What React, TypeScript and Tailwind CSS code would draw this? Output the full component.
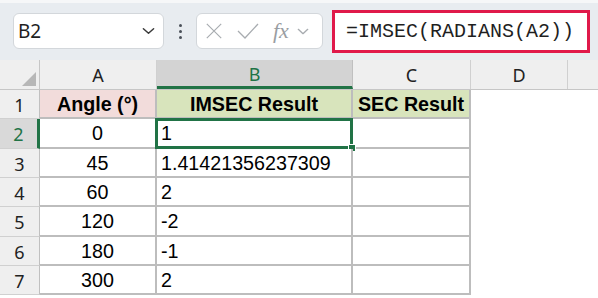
import React from 'react';

const cellFont = { fontFamily: '"Liberation Sans", Arial, sans-serif' };
const uiFont = { fontFamily: '"Noto Sans", "Open Sans", sans-serif' };

const rows = [
  { n: 1, h: 'h-[29px]', a: 'Angle (°)', b: 'IMSEC Result', c: 'SEC Result', head: true },
  { n: 2, h: 'h-[30px]', a: '0', b: '1', c: '' },
  { n: 3, h: 'h-[29px]', a: '45', b: '1.41421356237309', c: '' },
  { n: 4, h: 'h-[29px]', a: '60', b: '2', c: '' },
  { n: 5, h: 'h-[30px]', a: '120', b: '-2', c: '' },
  { n: 6, h: 'h-[29px]', a: '180', b: '-1', c: '' },
  { n: 7, h: 'h-[29px]', a: '300', b: '2', c: '' },
];

const Chevron = ({ className }: { className: string }) => (
  <svg viewBox="0 0 14 8" className={className} fill="none" strokeWidth="1.6" strokeLinecap="round" strokeLinejoin="round">
    <path d="M1.5 1.5 L7 6.5 L12.5 1.5" stroke="currentColor" />
  </svg>
);

const Toolbar = () => (
  <div className="h-[60px] bg-[#e8ecf0] border-t-[3px] border-[#f6f7f8] flex items-start pt-[10px]">
    <div className="ml-[13px] w-[151px] h-[36px] bg-white border border-[#d3d7db] rounded-[6px] flex items-center justify-between pl-[4px] pr-[8px]">
      <span className="text-[19px] text-[#1f1f1f]" style={uiFont}>B2</span>
      <Chevron className="w-[13px] h-[8px] text-[#3a3a3a]" />
    </div>
    <div className="w-[32px] h-[36px] flex flex-col items-center justify-center gap-[3px]">
      <div className="w-[3px] h-[3px] rounded-full bg-[#4a5058]" />
      <div className="w-[3px] h-[3px] rounded-full bg-[#4a5058]" />
      <div className="w-[3px] h-[3px] rounded-full bg-[#4a5058]" />
    </div>
    <div className="w-[127px] h-[36px] bg-white border border-[#d3d7db] rounded-[6px] flex items-center pl-[8px]">
      <svg viewBox="0 0 20 20" className="w-[18px] h-[18px]" fill="none" stroke="#a8acb0" strokeWidth="1.3">
        <path d="M2 2 L18 18 M18 2 L2 18" />
      </svg>
      <svg viewBox="0 0 22 18" className="w-[22px] h-[18px] ml-[14px]" fill="none" stroke="#a8acb0" strokeWidth="1.3">
        <path d="M1 9 L8 16 L21 2" />
      </svg>
      <span className="ml-[14px] text-[22px] italic text-[#9a9ea2] leading-none" style={{ fontFamily: '"Liberation Serif", serif' }}>fx</span>
      <Chevron className="w-[12px] h-[7px] text-[#a8acb0] ml-[8px]" />
    </div>
    <div className="ml-[9px] -mt-[3px] w-[258px] h-[43px] bg-white border-[3px] border-[#e0194a] flex items-center pl-[11px]">
      <span className="text-[20px] text-[#1f1f1f]" style={{ fontFamily: '"Liberation Mono", "DejaVu Sans Mono", monospace' }}>
        =IMSEC(RADIANS(A2))
      </span>
    </div>
  </div>
);

const HeaderRow = () => (
  <div className="flex h-[30px] bg-[#efefef] border-b border-[#c6c6c6]" style={uiFont}>
    <div className="w-[40px] shrink-0 border-r border-[#c6c6c6] relative">
      <div className="absolute right-[3px] bottom-[3px] w-0 h-0 border-l-[14px] border-l-transparent border-b-[14px] border-b-[#b7b7b7]" />
    </div>
    <div className="w-[117px] shrink-0 border-r border-[#d0d0d0] flex items-center justify-center text-[18px] text-[#222] pt-[2px]">A</div>
    <div className="w-[196px] shrink-0 bg-[#d3d3d3] border-r border-[#c0c0c0] border-b-[3px] border-b-[#217346] flex items-center justify-center text-[18px] text-[#217346] pt-[3px]">B</div>
    <div className="w-[118px] shrink-0 border-r border-[#d0d0d0] flex items-center justify-center text-[18px] text-[#222] pt-[2px]">C</div>
    <div className="w-[97px] shrink-0 border-r border-[#d0d0d0] flex items-center justify-center text-[18px] text-[#222] pt-[2px]">D</div>
    <div className="flex-1" />
  </div>
);

const Grid = () => (
  <div>
    <HeaderRow />
    {rows.map((r) => {
      const sel = r.n === 2;
      return (
        <div key={r.n} className={`flex ${r.h}`}>
          <div
            className={`w-[40px] shrink-0 flex items-center justify-center text-[18px] border-b border-[#d0d0d0] pt-[2px] ${
              sel ? 'bg-[#d9d9d9] text-[#217346] border-r-[3px] border-r-[#217346]' : 'bg-[#efefef] text-[#222] border-r border-r-[#c0c0c0]'
            }`}
            style={uiFont}
          >
            {r.n}
          </div>
          <div
            className={`w-[117px] shrink-0 flex items-center justify-center text-[19.7px] text-black border-r-2 border-b-2 border-[#bdbdbd] pt-[2px] ${
              r.head ? 'bg-[#f2dcdb] font-bold' : 'bg-white'
            }`}
            style={cellFont}
          >
            {r.a}
          </div>
          <div
            className={`w-[196px] shrink-0 flex items-center text-[19.7px] text-black border-r-2 border-b-2 border-[#bdbdbd] relative pt-[2px] ${
              r.head ? 'bg-[#d8e4bc] font-bold justify-center' : 'bg-white pl-[4px]'
            }`}
            style={cellFont}
          >
            {r.b}
            {sel && (
              <>
                <div className="absolute -left-[2px] -top-[1px] -right-[2px] -bottom-[2px] border-[3px] border-[#217346] pointer-events-none" />
                <div className="absolute -right-[5px] -bottom-[5px] w-[8px] h-[8px] bg-[#217346] border border-white" />
              </>
            )}
          </div>
          <div
            className={`w-[118px] shrink-0 flex items-center justify-center text-[19.7px] text-black border-r-2 border-b-2 border-[#bdbdbd] pt-[2px] ${
              r.head ? 'bg-[#d8e4bc] font-bold' : 'bg-white'
            }`}
            style={cellFont}
          >
            {r.c}
          </div>
          <div className="flex-1 bg-white" />
        </div>
      );
    })}
  </div>
);

export default function App() {
  return (
    <div className="w-[598px] h-[298px] overflow-hidden bg-white">
      <Toolbar />
      <Grid />
    </div>
  );
}
